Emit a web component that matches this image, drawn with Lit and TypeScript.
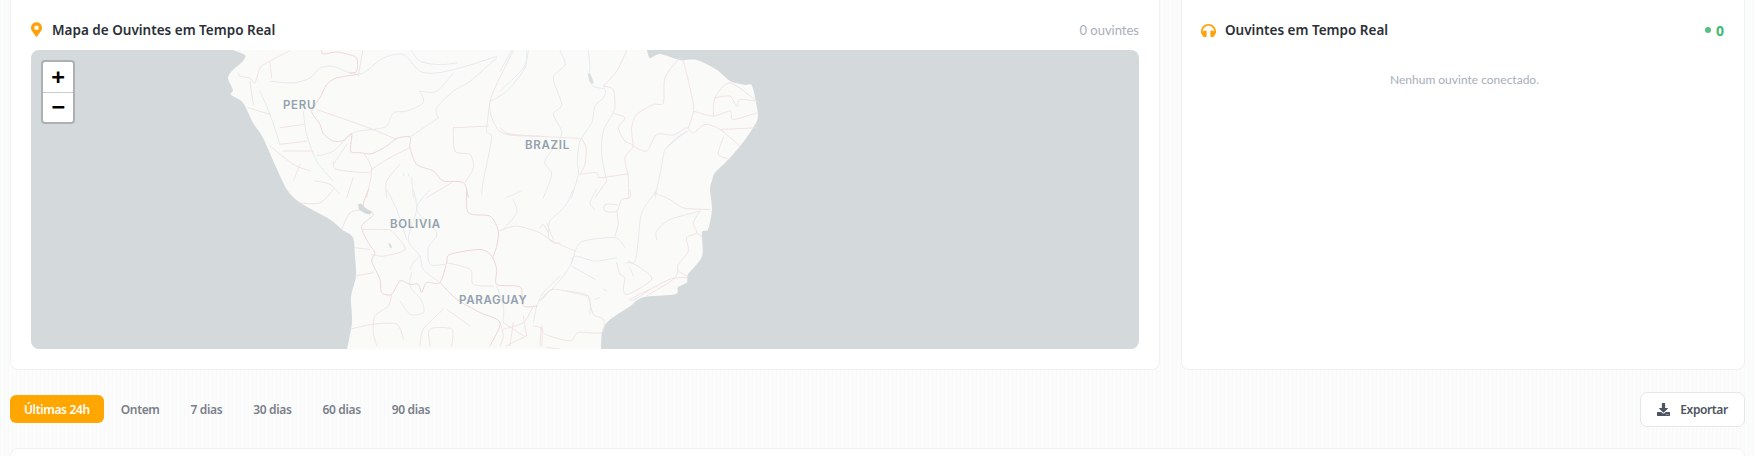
import { LitElement, html, css, svg } from "lit";
import { customElement } from "lit/decorators.js";

type Layer = { x: number; y: number; pink: string[]; grey: string[] };

const LAYERS: Layer[] = [
  {
    x: 220, y: 48,
    pink: [
      "M55,75 L60,85 L90,90 L105,105 L120,60 L145,42 L210,8",
      "!M305,8 L310,18 L350,12 L380,18 L410,30 L410,70 L390,75",
      "!M410,80 L350,90 L320,110 L300,150 L275,190 L300,230 L310,258 L340,280 L370,278 L395,258 L392,310 L420,315 L455,318 L500,295 L530,272 L570,268 L570,300 L590,350 L640,370 L670,400 L730,405 L745,450",
      "M428,8 L415,85",
      "M880,8 L810,160 L830,240 L870,262 L960,265",
      "M290,185 L440,238 L530,275",
      "M700,240 L805,235 M700,240 L705,310 L750,320 L760,360 L735,405",
      "M430,315 L455,365 L440,450 M455,365 L510,330 L570,300 M620,450 L695,405",
      "M85,180 L150,200 M180,240 L250,230 M180,290 L260,280 M190,310 L280,310 M240,350 L220,400 M150,295 L220,350 L270,370",
      "M90,100 L100,170 M150,42 L155,90 M500,450 L500,400 L540,350",
      "M285,400 L330,410 L360,440 M340,340 L350,365 L440,375 L455,365 M400,390 L380,450",
    ],
    grey: [
      "M150,100 L220,105 L270,90 L300,60 L340,55 L390,75 L430,75 L490,30 L550,20 L600,70 L650,75 L700,65 L770,45 L830,25",
      "M600,130 L610,165 L560,190 L520,195 L500,235 L460,245 L400,255 L340,310 L290,325",
      "M600,130 L650,130 L700,75",
      "M655,210 L650,180 L700,130 L750,100 L830,30 M655,210 L570,268",
      "M575,8 L600,40 L660,50 L710,45",
      "M810,160 L800,250 L815,270 L790,400 L785,440",
      "M920,8 L915,60 L860,130 L810,160",
      "M120,130 L150,200 L180,290 M250,190 L260,260 L290,340 L340,400 M580,450 L575,390",
      "M340,350 L380,290 M550,385 L552,378 M565,385 L567,378",
    ],
  },
  {
    x: 500, y: 48,
    pink: [
      "M0,240 L40,260 L240,272",
      "M380,8 L350,70 L310,115",
      "M310,115 L340,125 L345,180 L340,195 L375,210 L355,240 L375,280 L400,295 L375,330 L385,390 L385,450",
      "M400,295 L440,310 L470,260 L520,262 L560,240 L580,255 L615,230 L660,245 L720,295",
      "M400,295 L395,240 L410,200 L460,170 L490,165 L495,90 L535,35 L550,40 L580,170 L575,210 L565,240",
      "M580,190 L640,205 L690,190 L700,215 L770,195",
      "M640,205 L645,150 L690,105 L770,160",
      "M645,150 L690,145 L710,175 L720,155 L770,160",
      "M665,245 L770,240 M670,270 L655,320 L690,335",
      "M240,380 L290,375 L300,390 L385,378 M285,450 L320,400",
      "M245,272 L258,300 L255,350 L240,380",
    ],
    grey: [
      "M265,8 L270,60 L265,85 L280,115 L315,125 L310,150 L285,175 L275,225 L240,280 L232,340 L235,380 L215,450",
      "M180,8 L195,50 L160,90 L185,170 L160,200 L185,260 L135,340 L155,380 L130,450",
      "M85,8 L70,60 L0,130",
      "M340,195 L310,250 L305,320 L320,400",
      "M560,250 L500,300 L490,325 L480,380 L465,450",
      "M35,8 L0,70 M65,430 L20,450",
      "M265,80 L275,105 M500,300 L530,270 L565,250",
    ],
  },
  {
    x: 240, y: 190,
    pink: [
      "!M385,0 L370,50 L400,75 L365,110 L385,160 L405,190 L395,215 L420,270 L425,310 L455,315 L480,275 L510,285 L535,285 L545,310 L560,280 L600,280 L620,220 L630,195 L720,180 L755,200 L770,240 L770,285 L830,290 L845,300 L850,350 L890,350",
      "!M680,0 L685,70 L750,80 L775,125 L770,170 L758,205",
      "!M600,280 L650,330 L720,370 L780,400 L750,470",
      "M455,315 L445,350 L405,380 L400,430 L410,470",
      "M180,40 L240,40 L280,0 M305,120 L330,70 L375,60",
      "M775,125 L830,110 L900,130 L940,160 L960,160",
      "M370,120 L440,120 L460,130 L495,180 L430,200 L395,195",
      "M345,175 L390,180 M345,260 L400,250",
      "M330,420 L400,405 L470,405 L490,450",
      "M780,400 L790,440 L780,470 M790,420 L850,400 L880,350 M880,410 L905,420 L905,470 M800,470 L860,440",
      "M570,470 L570,420 L635,420 L635,470",
      "M540,470 L550,420 L610,360 M620,360 L690,410",
      "M620,220 L690,240 L700,285 L760,290",
      "M790,400 L850,440 M820,400 L810,470 M850,380 L860,440",
    ],
    grey: [
      "M520,0 L530,60 L505,150 L540,200 L550,240 L600,280",
      "M570,0 L530,60 L590,130 L565,175 L570,225 L615,225",
      "M510,240 L520,220 L540,200 M515,250 L510,290 L545,335 L550,370 L510,375 L480,335",
      "M770,290 L790,350 L790,400 M890,350 L880,400 M960,260 L910,310 L890,350",
      "M440,0 L470,60 L500,150 M820,30 L830,70 L790,120 M920,100 L940,150",
    ],
  },
  {
    x: 540, y: 190,
    pink: [
      "M350,0 L345,10 L390,30 L430,55 L510,60",
      "M270,0 L270,25 L245,30 L230,65 L195,65 L195,45 L230,45",
      "M230,65 L235,100 L225,140",
      "M0,115 L10,105 L25,130 L30,150 L105,185",
      "M480,65 L460,100 L470,130 L440,145 L445,185 L415,225 L415,245 L440,260 M470,130 L490,145",
      "M230,220 L240,255 L255,265 L250,300 L265,315 L335,270 L300,235 L265,215",
      "M440,265 L395,268 L340,295 L285,330 L270,330 L330,300 M320,320 L400,270 L415,240",
      "M145,320 L160,375 L190,390 L185,430 L115,430 L90,455 L15,435 L5,410 L0,470",
      "M0,335 L40,300 L140,320 M20,475 L60,480",
    ],
    grey: [
      "M100,0 L75,50 L30,95 L25,130 M170,0 L150,40 L165,60",
      "M345,10 L305,70 L295,150 L285,215 L255,220",
      "M350,150 L350,125 L390,90 L480,65",
      "M105,185 L130,155 L225,145 L255,175",
      "M105,185 L95,220 L70,260 L40,295 L0,335",
      "M95,220 L105,200 L165,215 L230,205",
      "M95,230 L165,270 M190,300 L200,305 M80,305 L145,320 L150,375 M165,330 L180,325 M270,235 L280,260",
    ],
  },
];

const COAST =
  "M233,50 L245,55 L243,61 L233,70 L228,78 L233,90 L231,95 L243,103 L253,123 L263,138 L275,165 L287,190 L300,203 L330,220 L342,230 L353,238 L355,257 L356,277 L351,298 L352,323 L347,350";
const EAST =
  "M601,350 L602,333 L608,322 L630,307 L643,298 L675,295 L678,288 L687,283 L688,275 L702,257 L702,233 L708,230 L712,210 L710,190 L712,181 L715,173 L730,158 L745,140 L757,121 L757,108 L752,86 L745,85 L730,81 L717,70 L697,60 L680,60 L660,54 L650,58 L647,50";

/** Turns a traced polyline "M x,y L x,y ..." into a Catmull-Rom curve, so the traced map reads as organic lines. */
function smooth(d: string, continuation = false): string {
  return d
    .split("M")
    .filter((s) => s.trim())
    .map((sub) => {
      const p = sub
        .trim()
        .split(/\s*L\s*/)
        .map((c) => c.split(",").map(Number));
      let out = `${continuation ? "L" : "M"}${p[0][0]},${p[0][1]}`;
      for (let i = 0; i < p.length - 1; i++) {
        const a = p[Math.max(i - 1, 0)];
        const b = p[i];
        const c = p[i + 1];
        const e = p[Math.min(i + 2, p.length - 1)];
        const k = 0.14;
        out += ` C${b[0] + (c[0] - a[0]) * k},${b[1] + (c[1] - a[1]) * k} ${c[0] - (e[0] - b[0]) * k},${c[1] - (e[1] - b[1]) * k} ${c[0]},${c[1]}`;
      }
      return out;
    })
    .join(" ");
}

const LAND = `${smooth(COAST)} ${smooth(EAST, true)} Z`;

const LABELS = [
  { t: "PERU", x: 283, y: 97 },
  { t: "BRAZIL", x: 525, y: 137 },
  { t: "BOLIVIA", x: 390, y: 216 },
  { t: "PARAGUAY", x: 459, y: 292 },
];

const RANGES = ["Ontem", "7 dias", "30 dias", "60 dias", "90 dias"];

@customElement("app-root")
export class AppRoot extends LitElement {
  static styles = css`
    :host {
      display: block;
      height: 456px;
      overflow: hidden;
      background: repeating-linear-gradient(90deg, #f8f9fa 0 1px, #fcfcfd 1px 4px);
      font-family: "Noto Sans", "Open Sans", sans-serif;
      color: #2b2f36;
    }
    .top {
      display: grid;
      grid-template-columns: 1150px 564px;
      gap: 21px;
      padding: 0 10px;
    }
    .card {
      background: #fff;
      border: 1px solid #f0f1f3;
      border-top: none;
      border-radius: 0 0 8px 8px;
      height: 370px;
      box-sizing: border-box;
    }
    .left {
      padding: 0 20px 20px 20px;
      display: flex;
      flex-direction: column;
    }
    .right {
      padding: 0 20px 0 19px;
    }
    .head {
      display: flex;
      align-items: center;
      justify-content: space-between;
      height: 50px;
      padding-top: 10px;
      box-sizing: border-box;
    }
    .title {
      display: flex;
      align-items: center;
      font-size: 13.5px;
      font-weight: 600;
      color: #2b2f36;
    }
    .title svg {
      display: block;
      margin-right: 10px;
    }
    .right .title svg {
      margin-right: 9px;
    }
    .count {
      font-family: Lato, "Noto Sans", sans-serif;
      font-size: 13px;
      color: #a9adba;
    }
    .live {
      display: flex;
      align-items: center;
      gap: 5px;
      font-size: 14px;
      font-weight: 700;
      color: #3fb871;
    }
    .dot {
      width: 6px;
      height: 6px;
      border-radius: 50%;
      background: #55c07f;
    }
    .empty {
      font-family: Lato, "Noto Sans", sans-serif;
      text-align: center;
      font-size: 12px;
      color: #a9adba;
      padding: 22px 0 0 4px;
    }
    .map {
      position: relative;
      height: 300px;
      border-radius: 8px;
      overflow: hidden;
      background: #d4dadc;
    }
    .map > svg {
      display: block;
      width: 100%;
      height: 100%;
    }
    .place {
      position: absolute;
      font-family: Inter, Lato, sans-serif;
      font-size: 11.5px;
      font-weight: 600;
      letter-spacing: 0.7px;
      line-height: 16px;
      color: #93a1ad;
      white-space: nowrap;
    }
    .zoom {
      position: absolute;
      left: 10px;
      top: 10px;
      width: 34px;
      box-sizing: border-box;
      border: 2px solid #aeb1b3;
      border-radius: 4px;
      background: #fff;
      display: flex;
      flex-direction: column;
    }
    .zoom span {
      height: 30px;
      display: flex;
      align-items: center;
      justify-content: center;
      font-family: "DejaVu Sans Mono", "Liberation Mono", monospace;
      font-weight: 700;
      font-size: 22px;
      line-height: 30px;
      color: #000;
    }
    .zoom span + span {
      height: 29px;
      border-top: 1px solid #ccc;
    }
    .bar {
      display: flex;
      align-items: center;
      justify-content: space-between;
      padding: 22px 10px 0 10px;
      height: 57px;
      box-sizing: border-box;
    }
    .ranges {
      display: flex;
      align-items: center;
      gap: 3px;
      margin-top: -1px;
    }
    .range {
      height: 28px;
      padding: 0 14px;
      display: flex;
      align-items: center;
      font-size: 12px;
      font-weight: 600;
      letter-spacing: -0.35px;
      color: #7b7f88;
      border-radius: 6px;
    }
    .range.active {
      background: #ffa600;
      color: #fff;
    }
    .export {
      width: 105px;
      height: 35px;
      margin-top: -1px;
      box-sizing: border-box;
      border: 1px solid #e4e6e9;
      border-radius: 7px;
      background: #fff;
      display: flex;
      align-items: center;
      justify-content: center;
      gap: 10px;
      font-size: 12px;
      font-weight: 600;
      letter-spacing: -0.4px;
      color: #4d5360;
    }
    .export svg {
      display: block;
    }
    .below {
      margin: 21px 10px 0 10px;
      height: 40px;
      background: #fff;
      border: 1px solid #f0f1f3;
      border-radius: 8px 8px 0 0;
    }
  `;

  private renderMap() {
    return svg`
      <defs><filter id="soft" x="-5%" y="-5%" width="110%" height="110%"><feGaussianBlur stdDeviation="0.25" /></filter></defs>
      <path d=${LAND} fill="#fafaf9" filter="url(#soft)" />
      ${LAYERS.map(
        (l) => svg`
          <g transform="translate(${l.x} ${l.y}) scale(0.33333)" fill="none" stroke-linejoin="round" stroke-linecap="round" filter="url(#soft)">
            ${l.grey.map((d) => svg`<path d=${smooth(d)} stroke="#e3e8ea" stroke-width="2.6" />`)}
            ${l.pink.map((d) =>
              d.startsWith("!")
                ? svg`<path d=${smooth(d.slice(1))} stroke="#edd6da" stroke-width="3" />`
                : svg`<path d=${smooth(d)} stroke="#f0dee1" stroke-width="2.6" />`
            )}
          </g>`
      )}
      <path d="M358,205 L361,204 L366,209 L372,212 L370,215 L365,214 L359,210 Z" fill="#d4dadc" />
      <path d="M388,243 L390,248 L392,249 L391,245 Z" fill="#d4dadc" />
      <path d="M588,75 L590,82 L594,84 L592,78 L590,73 Z" fill="#d9dfe2" />
    `;
  }

  render() {
    return html`
      <div class="top">
        <section class="card left">
          <div class="head">
            <div class="title">
              <svg width="11" height="15" viewBox="0 0 384 512" aria-hidden="true">
                <path fill="#ffa20a" d="M172 501C27 291 0 269 0 192 0 86 86 0 192 0s192 86 192 192c0 77-27 99-172 309a24 24 0 0 1-40 0zm20-229a80 80 0 1 0 0-160 80 80 0 0 0 0 160z" />
              </svg>
              Mapa de Ouvintes em Tempo Real
            </div>
            <div class="count">0 ouvintes</div>
          </div>
          <div class="map">
            <svg viewBox="31 50 1108 300" preserveAspectRatio="none">${this.renderMap()}</svg>
            ${LABELS.map(
              (l) => html`<div class="place" style="left:${l.x - 31}px;top:${l.y - 50}px">${l.t}</div>`
            )}
            <div class="zoom"><span>+</span><span>−</span></div>
          </div>
        </section>
        <section class="card right">
          <div class="head">
            <div class="title">
              <svg width="15" height="15" viewBox="0 0 512 512" aria-hidden="true">
                <path fill="#ffa20a" d="M256 32C114.52 32 0 146.496 0 288v48a32 32 0 0 0 17.689 28.622l14.383 7.191C34.083 431.903 83.421 480 144 480h24c13.255 0 24-10.745 24-24V280c0-13.255-10.745-24-24-24h-24c-31.342 0-59.671 12.879-80 33.627V288c0-105.869 86.131-192 192-192s192 86.131 192 192v1.627C427.671 268.879 399.342 256 368 256h-24c-13.255 0-24 10.745-24 24v176c0 13.255 10.745 24 24 24h24c60.579 0 109.917-48.098 111.928-108.187l14.382-7.191A32 32 0 0 0 512 336v-48c0-141.504-114.52-256-256-256z" />
              </svg>
              Ouvintes em Tempo Real
            </div>
            <div class="live"><i class="dot"></i>0</div>
          </div>
          <div class="empty">Nenhum ouvinte conectado.</div>
        </section>
      </div>
      <div class="bar">
        <div class="ranges">
          <div class="range active">Últimas 24h</div>
          ${RANGES.map((r) => html`<div class="range">${r}</div>`)}
        </div>
        <div class="export">
          <svg width="13" height="13" viewBox="0 0 512 512" aria-hidden="true">
            <path fill="#4d5360" d="M216 0h80c13.3 0 24 10.7 24 24v168h87.7c17.8 0 26.7 21.5 14.1 34.1L269.7 378.3c-7.5 7.5-19.8 7.5-27.3 0L90.1 226.1c-12.6-12.6-3.7-34.1 14.1-34.1H192V24c0-13.3 10.7-24 24-24zm296 376v112c0 13.3-10.7 24-24 24H24c-13.3 0-24-10.7-24-24V376c0-13.3 10.7-24 24-24h146.7l49 49c20.1 20.1 52.5 20.1 72.6 0l49-49H488c13.3 0 24 10.7 24 24zm-124 88c0-11-9-20-20-20s-20 9-20 20 9 20 20 20 20-9 20-20zm64 0c0-11-9-20-20-20s-20 9-20 20 9 20 20 20 20-9 20-20z" />
          </svg>
          Exportar
        </div>
      </div>
      <div class="below"></div>
    `;
  }
}
